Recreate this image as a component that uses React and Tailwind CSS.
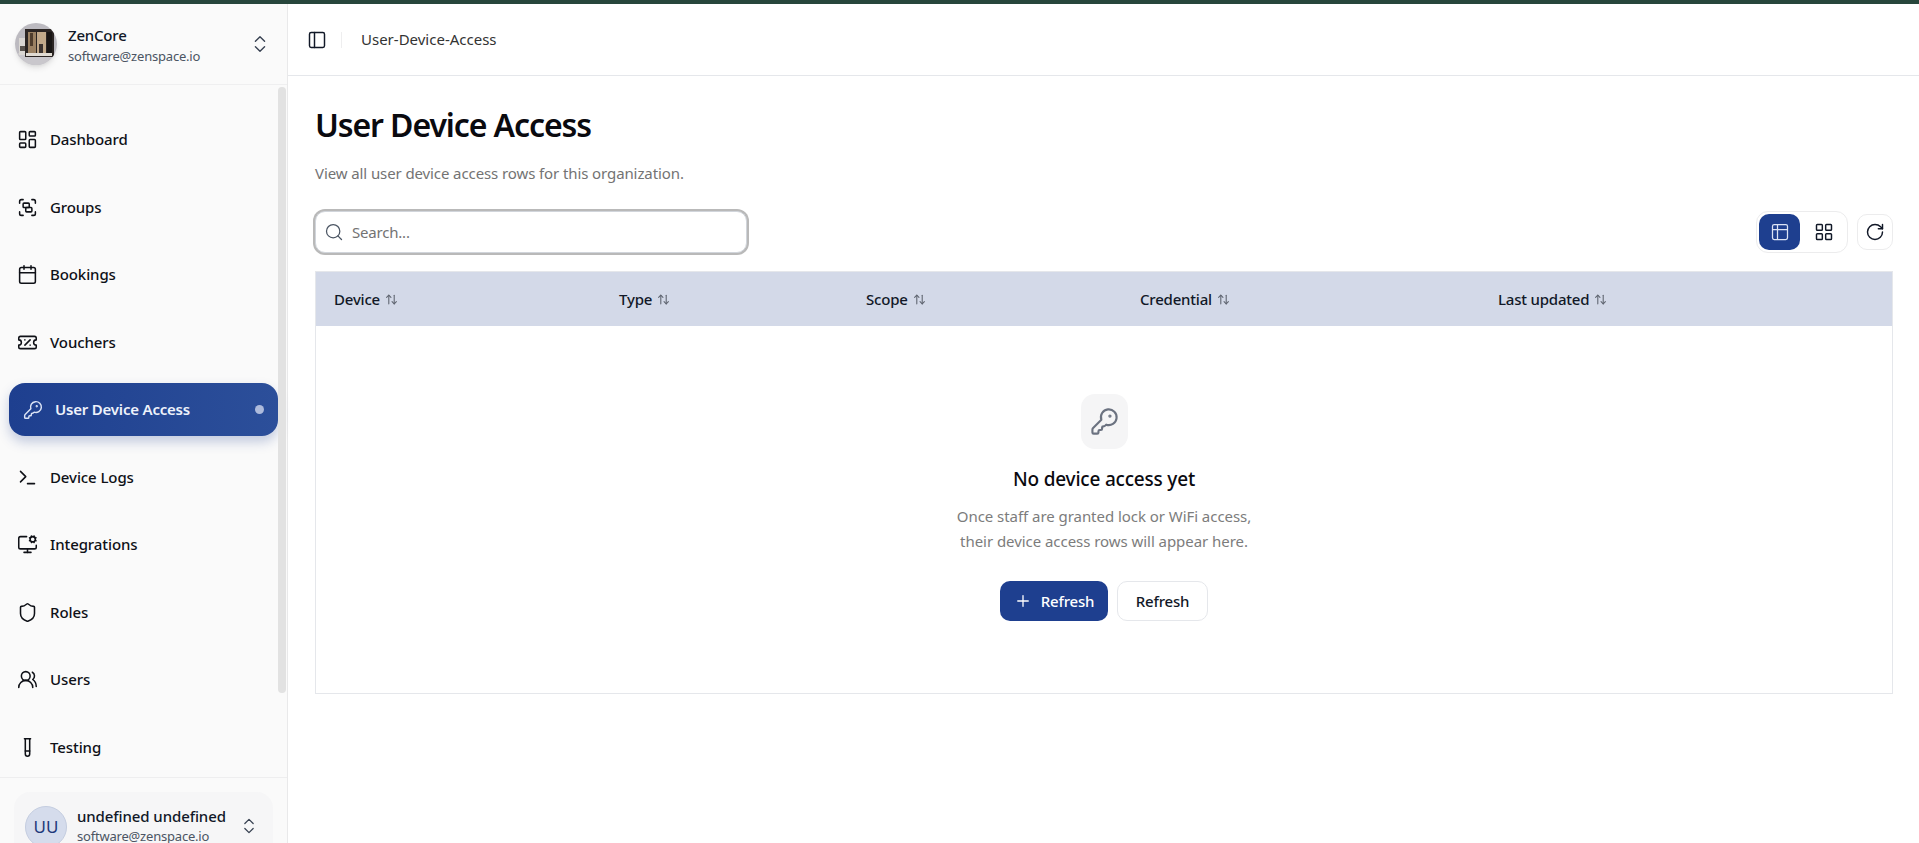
import React from 'react';
import {
  LayoutDashboard, Group, Calendar, TicketPercent, KeyRound, Terminal, MonitorCog, Shield, UsersRound, TestTube,
  ChevronsUpDown, PanelLeft, Search, ArrowUpDown, Table2, LayoutGrid, RotateCw, Plus,
} from 'lucide-react';

const font = 'font-["Noto_Sans",sans-serif]';

const navItems = [
  { label: 'Dashboard', icon: LayoutDashboard },
  { label: 'Groups', icon: Group },
  { label: 'Bookings', icon: Calendar },
  { label: 'Vouchers', icon: TicketPercent },
  { label: 'User Device Access', icon: KeyRound, active: true },
  { label: 'Device Logs', icon: Terminal },
  { label: 'Integrations', icon: MonitorCog },
  { label: 'Roles', icon: Shield },
  { label: 'Users', icon: UsersRound },
  { label: 'Testing', icon: TestTube },
];

const columns = [
  { label: 'Device', width: 'w-[285px]' },
  { label: 'Type', width: 'w-[247px]' },
  { label: 'Scope', width: 'w-[274px]' },
  { label: 'Credential', width: 'w-[358px]' },
  { label: 'Last updated', width: 'flex-1' },
];

// small photo of the pod, drawn by hand since no image file can be used
const OrgAvatar = () => (
  <svg viewBox="0 0 42 42" className="w-[42px] h-[42px] rounded-full shadow-md shrink-0">
    <rect width="42" height="42" fill="#bcbac0" />
    <rect x="0" y="30" width="42" height="12" fill="#c9c7cc" />
    <rect x="4" y="15" width="7" height="17" fill="#dad7d3" />
    <rect x="5" y="23" width="5" height="5" fill="#59534e" />
    <rect x="10" y="6" width="29" height="28" fill="#2b2523" />
    <rect x="13" y="9" width="8" height="22" fill="#9b8163" />
    <rect x="15" y="10" width="3" height="13" fill="#4f3d2d" />
    <rect x="22" y="9" width="9" height="22" fill="#c2a98a" />
    <rect x="24" y="21" width="4" height="9" fill="#3c3330" />
    <rect x="32" y="9" width="5" height="22" fill="#191615" />
    <rect x="11" y="30" width="26" height="3" fill="#e0dbd3" />
  </svg>
);

const NavItem = ({ label, icon: Icon, active }) => {
  if (active) {
    return (
      <div className="h-[53px] ml-[9px] w-[269px] flex items-center rounded-2xl bg-gradient-to-r from-[#1e3f8f] to-[#2c4f9a] shadow-[0_6px_12px_rgba(30,64,143,0.25)] text-white">
        <Icon className="w-[20px] h-[20px] ml-[14px] text-[#dbe3f5]" strokeWidth={1.75} />
        <span className="ml-[12px] text-[15px] font-semibold tracking-[-0.2px] text-[#eef2fb]">{label}</span>
        <span className="ml-auto mr-[14px] w-[9px] h-[9px] rounded-full bg-[#aebbdc]" />
      </div>
    );
  }
  return (
    <div className="h-[53px] flex items-center pl-[17px] text-[#0f1117]">
      <Icon className="w-[21px] h-[21px]" strokeWidth={1.75} />
      <span className="ml-[12px] text-[15px] font-medium tracking-[-0.1px]">{label}</span>
    </div>
  );
};

export default function App() {
  return (
    <div className={`${font} w-full h-[843px] overflow-hidden flex flex-col bg-white`}>
      <div className="h-[4px] bg-[#27463c] shrink-0" />
      <div className="flex flex-1 min-h-0">
        {/* Sidebar */}
        <aside className="w-[288px] shrink-0 bg-[#fafafa] border-r border-[#e9e9ea] flex flex-col">
          <div className="h-[81px] shrink-0 flex items-center pl-[15px] pr-[16px] border-b border-[#efeff0]">
            <OrgAvatar />
            <div className="ml-[11px] flex-1 min-w-0 pt-[4px]">
              <div className="text-[15px] leading-[21px] font-medium tracking-[-0.2px] text-[#111827]">ZenCore</div>
              <div className="text-[13px] leading-[21px] tracking-[-0.2px] text-[#4b5563]">software@zenspace.io</div>
            </div>
            <ChevronsUpDown className="w-[22px] h-[22px] text-[#374151]" strokeWidth={1.5} />
          </div>

          <div className="flex-1 min-h-0 relative">
            <nav className="pt-[28px] flex flex-col gap-[14.5px]">
              {navItems.map((item) => (
                <NavItem key={item.label} {...item} />
              ))}
            </nav>
            <div className="absolute right-[1px] top-[2px] w-[8px] h-[606px] rounded-full bg-[#e2e2e2]" />
          </div>

          <div className="h-[66px] shrink-0 border-t border-[#eeeeef] pt-[14px] px-[14px] overflow-hidden">
            <div className="h-[70px] rounded-2xl bg-[#f6f6f7] flex items-start pl-[11px] pr-[14px] pt-[14px]">
              <div className="w-[42px] h-[42px] rounded-full bg-[#d5dcec] border border-[#c4cde0] flex items-center justify-center text-[17px] text-[#1e3a7b] shrink-0">UU</div>
              <div className="ml-[10px] flex-1 min-w-0">
                <div className="text-[15px] leading-[20px] font-medium tracking-[-0.1px] text-[#111827] whitespace-nowrap">undefined undefined</div>
                <div className="text-[13px] leading-[20px] tracking-[-0.2px] text-[#4b5563]">software@zenspace.io</div>
              </div>
              <ChevronsUpDown className="w-[20px] h-[20px] mt-[10px] text-[#374151]" strokeWidth={1.5} />
            </div>
          </div>
        </aside>

        {/* Main */}
        <main className="flex-1 min-w-0">
          <header className="h-[72px] border-b border-[#e5e7eb] flex items-center">
            <PanelLeft className="ml-[19px] w-[20px] h-[20px] text-[#111827]" strokeWidth={1.75} />
            <div className="ml-[14px] w-px h-[16px] bg-[#eeeeef]" />
            <span className="ml-[19px] text-[15px] text-[#333333]">User-Device-Access</span>
          </header>

          <div className="pl-[27px] pr-[26px]">
            <h1 className="mt-[29px] text-[32px] leading-[40px] font-semibold tracking-[-1.1px] text-[#0a0a0f]">User Device Access</h1>
            <p className="mt-[17px] text-[15px] leading-[22px] tracking-[-0.1px] text-[#737373]">View all user device access rows for this organization.</p>

            <div className="mt-[27px] flex items-center justify-between">
              <div className="w-[432px] h-[42px] rounded-[10px] border border-[#d1d5db] ring-[2px] ring-[#b9b9b9] bg-white flex items-center pl-[8px]">
                <Search className="w-[20px] h-[20px] text-[#4b5563]" strokeWidth={1.5} />
                <span className="ml-[8px] text-[15px] tracking-[-0.2px] text-[#737373]">Search...</span>
              </div>
              <div className="flex items-center gap-[9px]">
                <div className="h-[42px] w-[92px] p-[2px] rounded-xl border border-[#ececed] flex items-center">
                  <div className="w-[41px] h-[36px] rounded-[10px] bg-[#1e3f8f] flex items-center justify-center">
                    <Table2 className="w-[20px] h-[20px] text-[#dbe3f5]" strokeWidth={1.5} />
                  </div>
                  <div className="flex-1 h-[36px] pl-[3px] flex items-center justify-center">
                    <LayoutGrid className="w-[20px] h-[20px] text-[#111827]" strokeWidth={1.75} />
                  </div>
                </div>
                <div className="w-[36px] h-[36px] rounded-[10px] border border-[#ececed] flex items-center justify-center">
                  <RotateCw className="w-[20px] h-[20px] text-[#111827]" strokeWidth={1.75} />
                </div>
              </div>
            </div>

            <div className="mt-[18px] border border-[#e5e7eb]">
              <div className="h-[54px] bg-[#d3d9e8] flex items-center pl-[18px]">
                {columns.map((c) => (
                  <div key={c.label} className={`${c.width} flex items-center gap-[5px]`}>
                    <span className="text-[15px] font-medium tracking-[-0.2px] text-[#111827]">{c.label}</span>
                    <ArrowUpDown className="w-[13px] h-[13px] text-[#5f6570]" strokeWidth={2} />
                  </div>
                ))}
              </div>
              <div className="h-[367px] flex flex-col items-center pt-[68px]">
                <div className="w-[47px] h-[55px] rounded-[14px] bg-[#f5f5f6] flex items-center justify-center">
                  <KeyRound className="w-[29px] h-[29px] text-[#6b7280]" strokeWidth={1.75} />
                </div>
                <h2 className="mt-[16px] text-[19px] leading-[28px] font-medium tracking-[-0.2px] text-[#0a0a0f]">No device access yet</h2>
                <p className="mt-[11px] text-center text-[15px] leading-[25px] tracking-[-0.05px] text-[#7c7c7c]">
                  Once staff are granted lock or WiFi access,<br />their device access rows will appear here.
                </p>
                <div className="mt-[27px] flex items-center gap-[9px]">
                  <div className="w-[108px] h-[40px] rounded-[10px] bg-[#1e3f8f] flex items-center justify-center gap-[9px] text-white">
                    <Plus className="w-[18px] h-[18px]" strokeWidth={1.75} />
                    <span className="text-[15px] font-medium tracking-[-0.2px]">Refresh</span>
                  </div>
                  <div className="w-[91px] h-[40px] rounded-[10px] border border-[#e5e7eb] flex items-center justify-center text-[15px] font-medium tracking-[-0.2px] text-[#111827]">
                    Refresh
                  </div>
                </div>
              </div>
            </div>
          </div>
        </main>
      </div>
    </div>
  );
}
